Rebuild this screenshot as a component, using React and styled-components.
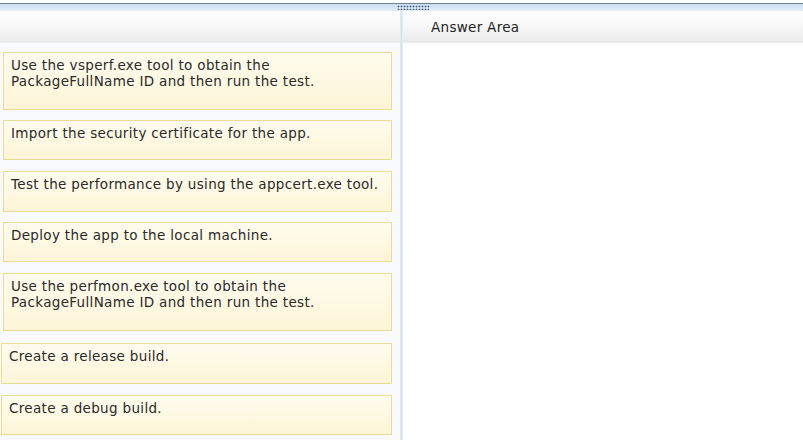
import React from "react";
import styled, { createGlobalStyle } from "styled-components";

const GlobalStyle = createGlobalStyle`
  html, body {
    margin: 0;
    padding: 0;
    background: #ffffff;
  }
  body {
    font-family: "DejaVu Sans", Verdana, sans-serif;
  }
`;

const Page = styled.div`
  width: 803px;
  height: 440px;
  display: flex;
  flex-direction: column;
  overflow: hidden;
  background: #fff;
`;

const TopBar = styled.div`
  height: 7px;
  margin-top: 3px;
  border-top: 1px solid #6e8698;
  background: linear-gradient(#c9ddf3, #e4eefa);
  display: flex;
  justify-content: flex-start;
  padding-left: 397px;
`;

const Grip = styled.div`
  width: 32px;
  height: 5px;
  margin-top: 1px;
  background-image: radial-gradient(circle, #3d5a7a 0.8px, transparent 1.1px);
  background-size: 3px 3px;
`;

const Columns = styled.div`
  flex: 1;
  display: grid;
  grid-template-columns: 400px 3px 1fr;
  min-height: 0;
`;

const Column = styled.div`
  display: flex;
  flex-direction: column;
  background: ${(p) => (p.$tint ? "#f8fafd" : "#ffffff")};
`;

const Divider = styled.div`
  background: linear-gradient(90deg, #e3edf8, #d4e3f3, #eaf2fb);
`;

const Header = styled.div`
  height: 32px;
  flex-shrink: 0;
  background: linear-gradient(#ffffff 0%, #f8f8f8 45%, #e9e9e9 100%);
  display: flex;
  align-items: center;
  padding-left: 28px;
  font-size: 13.5px;
  letter-spacing: 0.3px;
  color: #222;
`;

const List = styled.div`
  display: flex;
  flex-direction: column;
  padding: 9px 8px 0 3px;
`;

const Card = styled.div`
  box-sizing: border-box;
  height: ${(p) => p.$h}px;
  margin: ${(p) => p.$mt}px 0 0 ${(p) => p.$ml || 0}px;
  padding: 4px 7px 0;
  background: linear-gradient(#fffcef, #fdf5d7);
  border: 1px solid #eadb95;
  font-size: 13.5px;
  letter-spacing: 0.33px;
  line-height: 16px;
  color: #2a2a2a;
  white-space: pre-line;
`;

const items = [
  { text: "Use the vsperf.exe tool to obtain the\nPackageFullName ID and then run the test.", h: 58, mt: 0 },
  { text: "Import the security certificate for the app.", h: 40, mt: 10 },
  { text: "Test the performance by using the appcert.exe tool.", h: 41, mt: 11 },
  { text: "Deploy the app to the local machine.", h: 40, mt: 10 },
  { text: "Use the perfmon.exe tool to obtain the\nPackageFullName ID and then run the test.", h: 58, mt: 11 },
  { text: "Create a release build.", h: 41, mt: 12, ml: -2 },
  { text: "Create a debug build.", h: 40, mt: 11, ml: -2 },
];

export default function App() {
  return (
    <Page>
      <GlobalStyle />
      <TopBar>
        <Grip />
      </TopBar>
      <Columns>
        <Column $tint>
          <Header />
          <List>
            {items.map((it, i) => (
              <Card key={i} $h={it.h} $mt={it.mt} $ml={it.ml}>
                {it.text}
              </Card>
            ))}
          </List>
        </Column>
        <Divider />
        <Column>
          <Header>Answer Area</Header>
        </Column>
      </Columns>
    </Page>
  );
}
